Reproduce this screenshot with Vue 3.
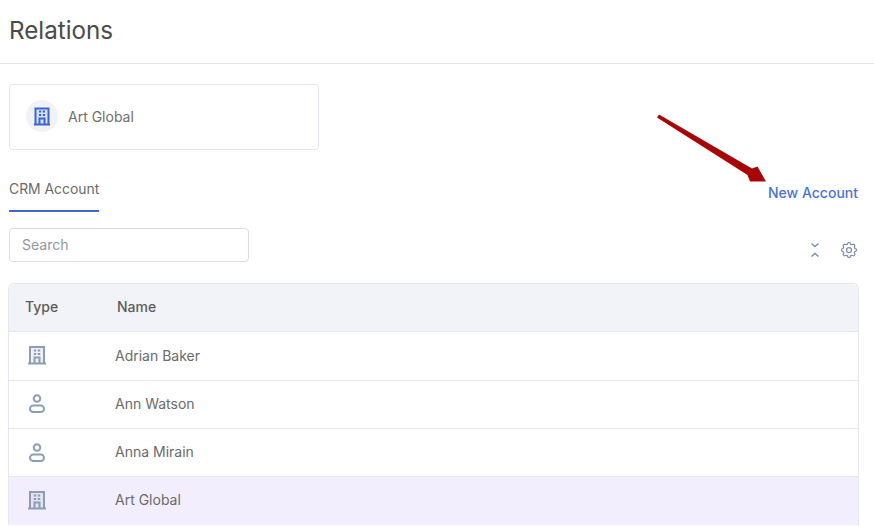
<script setup>
const rows = [
  { type: 'org', name: 'Adrian Baker' },
  { type: 'person', name: 'Ann Watson' },
  { type: 'person', name: 'Anna Mirain' },
  { type: 'org', name: 'Art Global', active: true },
]
</script>

<template>
  <div class="page">
    <header class="head"><h1>Relations</h1></header>
    <main class="body">
      <div class="card">
        <span class="avatar">
          <svg width="20" height="20" viewBox="0 0 20 20" fill="none" stroke="#3b66d1" stroke-width="2">
            <path d="M2 18.500h16M3.500 18V2.500h13V18" fill="#3b66d1" fill-opacity=".12" />
            <path d="M7.500 18v-5.500h5V18" />
            <path d="M7 5.500h2.200M10.800 5.500H13M7 9h2.200M10.800 9H13" stroke-width="2" />
          </svg>
        </span>
        <span class="card-name">Art Global</span>
      </div>

      <div class="tabs">
        <span class="tab">CRM Account</span>
        <a class="new">New Account</a>
      </div>

      <div class="tools">
        <input class="search" placeholder="Search" />
        <div class="icons">
          <svg width="12" height="20" viewBox="0 0 12 20" fill="none" stroke="#7c8ea8" stroke-width="1.500">
            <path d="M2.500 3.500 6 6.500l3.500-3M2.500 16.500 6 13.500l3.500 3" />
          </svg>
          <svg width="20" height="20" viewBox="0 0 24 24" fill="none" stroke="#7c8ea8" stroke-width="1.500" stroke-linecap="round" stroke-linejoin="round">
            <path d="M10.300 4.300c.4-1.800 3-1.800 3.400 0a1.700 1.700 0 0 0 2.600 1.100c1.500-.9 3.300.8 2.400 2.400a1.700 1.700 0 0 0 1 2.500c1.800.4 1.800 3 0 3.400a1.700 1.700 0 0 0-1 2.600c.9 1.500-.9 3.300-2.400 2.400a1.700 1.700 0 0 0-2.600 1c-.4 1.800-3 1.800-3.400 0a1.700 1.700 0 0 0-2.600-1c-1.500.9-3.300-.9-2.400-2.400a1.700 1.700 0 0 0-1-2.600c-1.800-.4-1.800-3 0-3.400a1.700 1.700 0 0 0 1-2.500c-.9-1.600.9-3.300 2.400-2.400a1.700 1.700 0 0 0 2.600-1.100z" />
            <circle cx="12" cy="12" r="3" />
          </svg>
        </div>
      </div>

      <div class="table">
        <div class="row header">
          <span class="col-type">Type</span>
          <span>Name</span>
        </div>
        <div v-for="r in rows" :key="r.name" class="row" :class="{ active: r.active }">
          <span class="col-type icon">
            <svg v-if="r.type === 'org'" width="20" height="20" viewBox="0 0 20 20" fill="none" stroke="#8d9db5" stroke-width="2">
              <path d="M1 18.500h18M3 18V2h14v16" fill="#8d9db5" fill-opacity=".15" />
              <path d="M7.500 18v-5.500h5V18" />
              <path d="M6.800 5.500h2.400M10.800 5.500h2.400M6.800 9h2.400M10.800 9h2.400" stroke-width="2" />
            </svg>
            <svg v-else width="20" height="20" viewBox="0 0 20 20" fill="none" stroke="#8d9db5" stroke-width="2">
              <circle cx="10" cy="5.500" r="3.300" />
              <rect x="3" y="12.500" width="14" height="6.500" rx="3.250" />
            </svg>
          </span>
          <span class="name">{{ r.name }}</span>
        </div>
      </div>
    </main>

    <svg class="arrow" width="874" height="526" viewBox="0 0 874 526">
      <path d="M657 117.500 659 114.500 752 168.500 757.500 166.500 766 181.500 750 181.500 747.500 175z" fill="#a80606" />
    </svg>
  </div>
</template>

<style scoped>
.page {
  position: relative;
  width: 874px;
  height: 526px;
  overflow: hidden;
  background: #fff;
  font-family: Inter, "Liberation Sans", sans-serif;
  font-size: 14px;
  color: #666;
}
.head {
  height: 63px;
  border-bottom: 1px solid #e5e7ee;
  padding: 0 9px;
  display: flex;
  align-items: center;
}
h1 {
  margin: 0 0 2px;
  font-size: 24.200px;
  font-weight: 400;
  color: #4a4a4a;
}
.body {
  padding: 20px 16px 0 9px;
}
.card {
  width: 310px;
  height: 66px;
  box-sizing: border-box;
  border: 1px solid #e4e7ef;
  border-radius: 4px;
  padding: 0 16px 2px;
  display: flex;
  align-items: center;
  gap: 10px;
}
.avatar {
  width: 32px;
  height: 32px;
  border-radius: 50%;
  background: #f0f2f8;
  display: flex;
  align-items: center;
  justify-content: center;
}
.card-name {
  color: #6e6e6e;
}
.tabs {
  margin-top: 24px;
  display: flex;
  justify-content: space-between;
  height: 38px;
}
.tab {
  height: 36px;
  line-height: 30px;
  border-bottom: 2px solid #3f68d2;
  color: #6a6a6a;
  font-size: 13.900px;
}
.new {
  margin-top: 10px;
  line-height: 18px;
  height: 18px;
  color: #4a72d8;
  font-weight: 500;
}
.tools {
  margin-top: 16px;
  display: flex;
  justify-content: space-between;
  height: 34px;
}
.search {
  width: 240px;
  height: 34px;
  box-sizing: border-box;
  border: 1px solid #d9dce5;
  border-radius: 4px;
  padding: 0 12px 2px;
  font: inherit;
  outline: none;
}
.search::placeholder {
  color: #92969e;
  opacity: 1;
}
.icons {
  display: flex;
  align-items: center;
  gap: 18px;
  margin-right: -1px;
  padding-top: 11px;
  height: 33px;
  box-sizing: border-box;
}
.table {
  margin: 21px -1px 0 -1px;
  border: 1px solid #e4e7ef;
  border-radius: 6px 6px 0 0;
  border-bottom: 0;
}
.row {
  display: flex;
  align-items: center;
  height: 48.300px;
  padding-bottom: 2px;
  box-sizing: border-box;
  border-top: 1px solid #e4e7ef;
  color: #6a6a6a;
}
.row.header {
  height: 47.400px;
  border-top: 0;
  background: #f2f3f8;
  border-radius: 6px 6px 0 0;
  color: #5c5c5c;
  font-weight: 500;
}
.row.active {
  background: #f3eefd;
}
.col-type {
  width: 108px;
  padding-left: 16px;
  box-sizing: border-box;
}
.icon {
  width: 106px;
  padding-left: 18px;
  display: flex;
}
.arrow {
  position: absolute;
  left: 0;
  top: 0;
  pointer-events: none;
}
</style>
